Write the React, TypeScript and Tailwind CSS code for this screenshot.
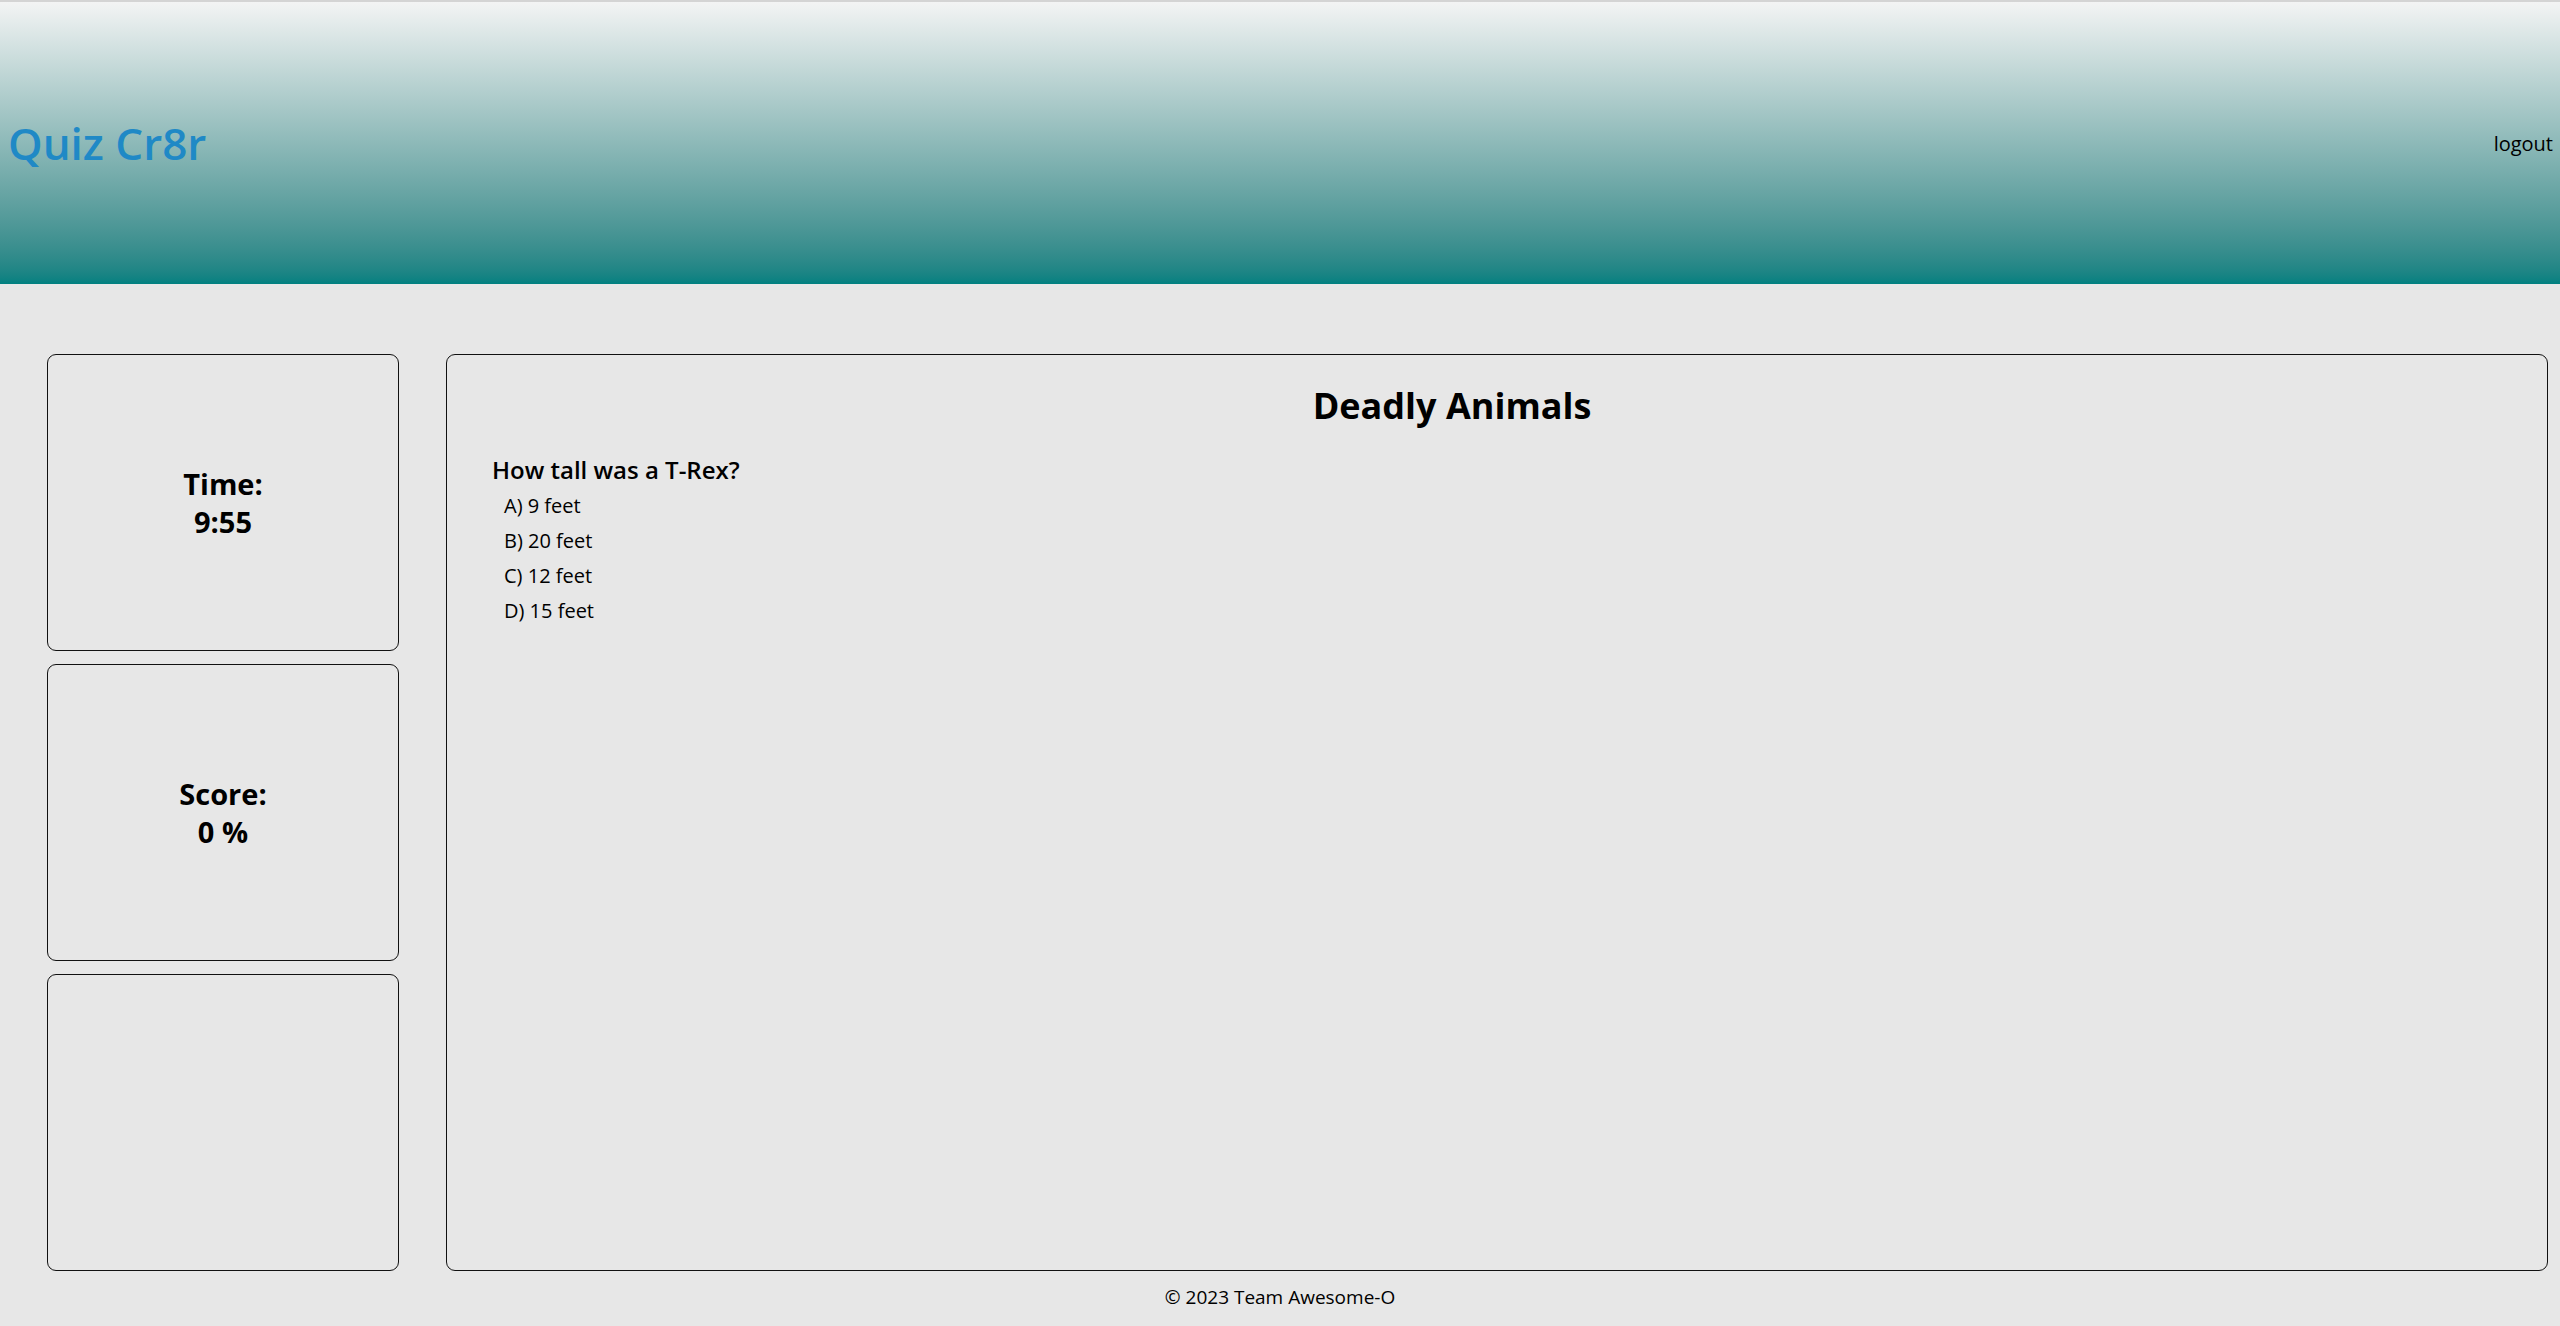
import React from 'react';

const font = { fontFamily: '"Trebuchet MS", "Open Sans", "DejaVu Sans", sans-serif' };

const answers = ['A) 9 feet', 'B) 20 feet', 'C) 12 feet', 'D) 15 feet'];

const StatCard: React.FC<{ label?: string; value?: string }> = ({ label, value }) => (
    <div className="flex h-[297px] flex-col items-center justify-center rounded-[9px] border-[1.5px] border-[#111]">
        {label && (
            <div className="text-center text-[29px] font-bold leading-[38px] text-black">
                <div>{label}</div>
                <div>{value}</div>
            </div>
        )}
    </div>
);

const App: React.FC = () => {
    return (
        <div className="flex h-[1326px] flex-col bg-[#e7e7e7]" style={font}>
            <header className="flex h-[284px] items-center justify-between border-t-2 border-[#d4d4d4] bg-gradient-to-b from-[#f3f4f4] to-[#008080] pl-[8px] pr-[7px]">
                <h1 className="text-[44px] font-semibold text-[#1f89c6]">Quiz Cr8r</h1>
                <a href="#" className="mt-[2px] text-[20px] text-black">
                    logout
                </a>
            </header>

            <main className="flex pt-[70px] pl-[47px] pr-[12px]">
                <div className="flex w-[352px] flex-col gap-[13px]">
                    <StatCard label="Time:" value="9:55" />
                    <StatCard label="Score:" value="0 %" />
                    <StatCard />
                </div>

                <section className="ml-[47px] h-[917px] flex-1 rounded-[9px] border-[1.5px] border-[#111] pl-[45px]">
                    <h2 className="mt-[29px] pr-[135px] text-center text-[36px] font-bold leading-[44px] text-black">
                        Deadly Animals
                    </h2>
                    <h3 className="mt-[27px] text-[24px] font-semibold leading-[30px] text-black">
                        How tall was a T-Rex?
                    </h3>
                    <ul className="mt-[3px] pl-[12px]">
                        {answers.map((a) => (
                            <li key={a} className="text-[20px] leading-[35px] text-black">
                                {a}
                            </li>
                        ))}
                    </ul>
                </section>
            </main>

            <footer className="mt-[13px] text-center text-[19px] leading-[26px] text-black">
                © 2023 Team Awesome-O
            </footer>
        </div>
    );
};

export default App;
